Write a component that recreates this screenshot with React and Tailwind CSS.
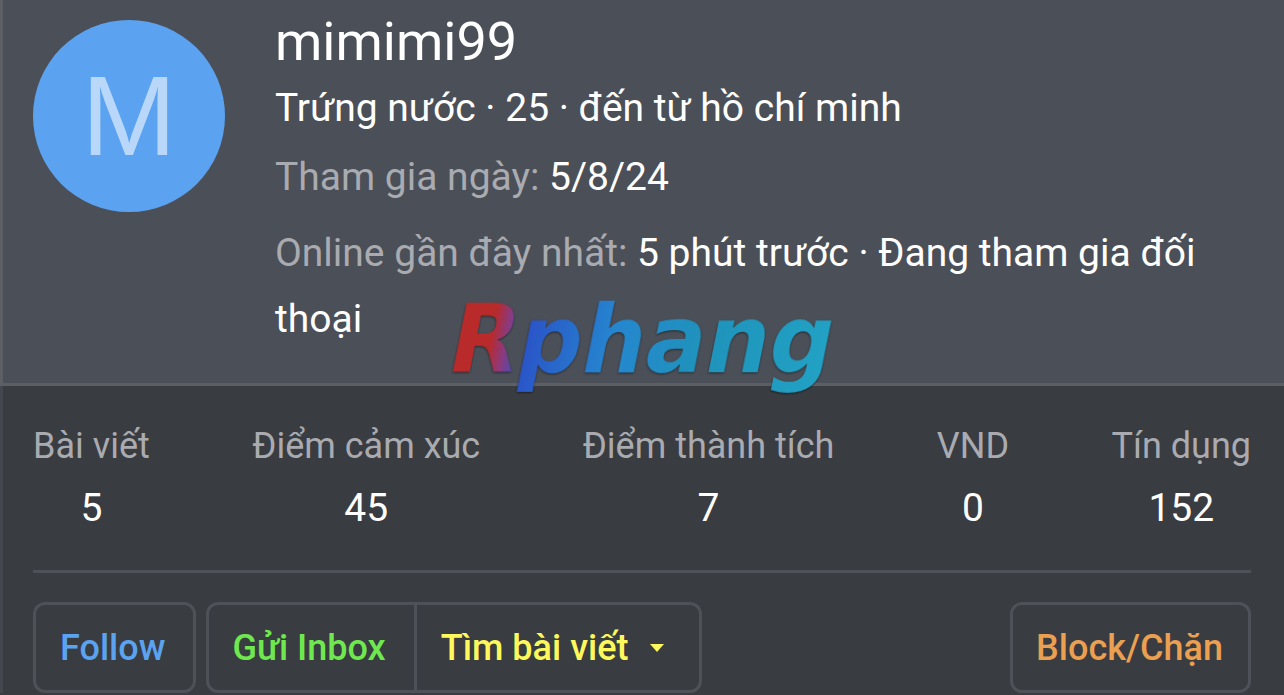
const stats = [
  { label: 'Bài viết', value: '5' },
  { label: 'Điểm cảm xúc', value: '45' },
  { label: 'Điểm thành tích', value: '7' },
  { label: 'VND', value: '0' },
  { label: 'Tín dụng', value: '152' },
]

export default function App() {
  return (
    <div className="relative h-[695px] w-[1284px] overflow-hidden bg-[#393c41] font-['Roboto',sans-serif]">
      <div className="flex h-[386px] gap-[51px] border-b-[3px] border-l-[3px] border-[#5c5f66] bg-[#4b4f58] pl-[30px] pt-[20px]">
        <div className="flex h-[192px] w-[192px] shrink-0 items-center justify-center rounded-full bg-[#5ba3f0] font-['Liberation_Sans',sans-serif] text-[114px] leading-none text-[#b9d8f9]">
          M
        </div>
        <div className="min-w-0 flex-1 pr-[32px]">
          <div className="-ml-px text-[54px] leading-[44px] text-white">mimimi99</div>
          <div className="-ml-px mt-[22px] text-[39px] leading-[44px] text-white">Trứng nước · 25 · đến từ hồ chí minh</div>
          <div className="-ml-px mt-[25px] text-[39px] leading-[44px] text-[#a9abb0]">
            Tham gia ngày: <span className="text-white">5/8/24</span>
          </div>
          <div className="-ml-px mt-[21px] text-[39px] leading-[66px] text-[#a9abb0]">
            Online gần đây nhất: <span className="text-white">5 phút trước · Đang tham gia đối thoại</span>
          </div>
        </div>
      </div>

      <div className="border-l-[3px] border-[#44474d] pl-[30px] pr-[33px] pt-[38px]">
        <div className="flex justify-between border-b-[3px] border-[#4e5157] pb-[40px]">
          {stats.map((s) => (
            <div key={s.label} className="text-center">
              <div className="text-[36px] leading-[44px] text-[#a9abb0]">{s.label}</div>
              <div className="mt-[18px] text-[39px] leading-[44px] text-white">{s.value}</div>
            </div>
          ))}
        </div>

        <div className="mt-[29px] flex h-[91px] items-stretch text-[36px] font-medium">
          <button className="rounded-[12px] border-[3px] border-[#4e5157] pl-[24px] pr-[28px] text-[#5ba3f0]">Follow</button>
          <div className="ml-[10px] flex rounded-[12px] border-[3px] border-[#4e5157]">
            <button className="border-r-[3px] border-[#4e5157] pl-[23px] pr-[28px] text-[#6fe84f]">Gửi Inbox</button>
            <button className="flex items-center pl-[24px] pr-[35px] text-[#fdf95c]">
              Tìm bài viết
              <span className="ml-[22px] h-0 w-0 border-x-[7px] border-t-[8px] border-x-transparent border-t-[#fdf95c]" />
            </button>
          </div>
          <button className="ml-auto rounded-[12px] border-[3px] border-[#4e5157] pl-[23px] pr-[25px] text-[#eb9f50]">Block/Chặn</button>
        </div>
      </div>

      {/* watermark */}
      <div className="absolute left-[451px] top-[285px] origin-left -skew-x-[12deg] scale-x-[0.95] bg-[linear-gradient(90deg,#b92a2a_0%,#b92a2a_10%,#8a3a80_14%,#2a54c8_19%,#2587cf_42%,#1f93bb_65%,#22a3c6_100%)] bg-clip-text pr-2 font-['DejaVu_Sans',sans-serif] text-[94px] font-bold leading-[110px] text-transparent drop-shadow-[0_1px_1px_rgba(0,0,0,0.5)]">
        Rphang
      </div>
    </div>
  )
}
